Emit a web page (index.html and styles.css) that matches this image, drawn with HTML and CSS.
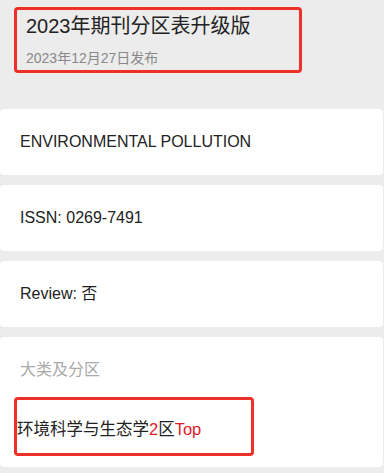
FILE: index.html
```html
<!DOCTYPE html>
<html>
<head>
<meta name="viewport" content="width=device-width, initial-scale=1">
<title>期刊分区</title>
<link rel="stylesheet" href="styles.css">
</head>
<body>
<div class="head">
  <div class="mark head-mark">
    <div class="title">2023年期刊分区表升级版</div>
    <div class="date">2023年12月27日发布</div>
  </div>
</div>

<div class="list">
  <div class="card">ENVIRONMENTAL POLLUTION</div>
  <div class="card">ISSN: 0269-7491</div>
  <div class="card">Review: 否</div>
  <div class="card card-zone">
    <div class="label">大类及分区</div>
    <div class="mark zone-mark">环境科学与生态学<span class="red">2</span>区<span class="red">Top</span></div>
  </div>
</div>
</body>
</html>
```

FILE: styles.css
```css
body {
  margin: 0;
  background-color: #ececec;
  font-family: "Liberation Sans", Arial, "Noto Sans CJK SC", sans-serif;
  color: #222;
}

.head {
  padding: 7px 0 36px 14px;
}

.mark {
  border: 3px solid #ee3128;
  border-radius: 4px;
  box-sizing: border-box;
}

.head-mark {
  width: 288px;
  height: 66px;
  padding: 3px 9px 3px 9px;
}

.title {
  font-size: 20px;
  line-height: 26px;
}

.date {
  margin-top: 10px;
  font-size: 14px;
  line-height: 18px;
  color: #888;
}

.list {
  display: flex;
  flex-direction: column;
  gap: 10px;
}

.card {
  background-color: #fff;
  border-radius: 4px;
  margin-right: 1px;
  padding: 22px 20px;
  font-size: 16px;
  line-height: 22px;
}

.card-zone {
  padding-bottom: 11px;
}

.label {
  color: #aaa;
}

.zone-mark {
  width: 240px;
  height: 59px;
  margin: 16px 0 0 -6px;
  padding: 18px 0 0 0;
  font-size: 16.5px;
}

.red {
  color: #e4182a;
}
```
